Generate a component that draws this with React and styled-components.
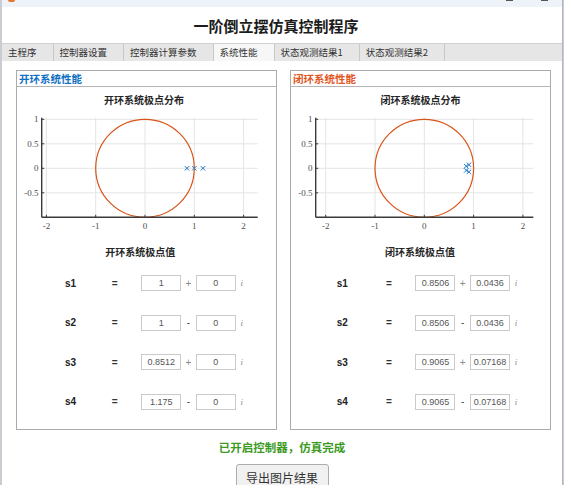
import React from 'react';
import styled, { createGlobalStyle } from 'styled-components';

const cjk = `"Noto Sans CJK SC", "Noto Sans", sans-serif`;
const latin = `"Liberation Sans", Arial, "Noto Sans CJK SC", sans-serif`;
const serif = `"Liberation Serif", "Times New Roman", serif`;

const GlobalStyle = createGlobalStyle`
  html, body {
    margin: 0;
    padding: 0;
  }
  body {
    background: #c9ccd1;
    overflow: hidden;
  }
`;

const Window = styled.div`
  box-sizing: border-box;
  width: 561px;
  height: 485px;
  margin-left: 2px;
  background: #fff;
  border-right: 1px solid #b4b8be;
  overflow: hidden;
  font-family: ${cjk};
`;

const TitleBar = styled.div`
  height: 7px;
  background: #eef2f9;
  display: flex;
  align-items: flex-end;
  overflow: hidden;
  padding: 0 0 0 6px;
`;

const AppIcon = styled.span`
  width: 7px;
  height: 8px;
  margin-bottom: 5px;
  border-radius: 2px;
  background: #e8752b;
`;

const WindowControls = styled.div`
  margin-left: auto;
  display: flex;
  align-items: flex-end;
  gap: 28px;
  padding-right: 14px;
`;

const ControlMark = styled.span`
  width: 7px;
  height: 1px;
  margin-bottom: 6px;
  background: #555;
`;

const Header = styled.div`
  box-sizing: border-box;
  height: 36px;
  padding: 1px 12px 0 0;
  display: flex;
  align-items: center;
  justify-content: center;
  font-size: 15px;
  font-weight: 700;
  color: #1c1c1c;
`;

const TabBar = styled.div`
  box-sizing: border-box;
  height: 18px;
  display: flex;
  background: #e6e6e6;
  border-top: 1px solid #d0d0d0;
`;

const Tab = styled.div`
  padding: 0 16px 0 6px;
  font-size: 9.5px;
  line-height: 17px;
  color: #333;
  white-space: nowrap;
  border-right: 1px solid #c9c9c9;
  background: ${p => (p.$active ? '#f7f7f7' : 'transparent')};
`;

const Content = styled.div`
  display: flex;
  gap: 13px;
  padding: 9px 0 0 14px;
`;

const Panel = styled.div`
  box-sizing: border-box;
  width: 261px;
  height: 360px;
  border: 1px solid #ababab;
  display: flex;
  flex-direction: column;
`;

const PanelHeader = styled.div`
  height: 15px;
  padding-left: 2px;
  border-bottom: 1px solid #b4b4b4;
  font-size: 10.5px;
  font-weight: 700;
  line-height: 15px;
  color: ${p => p.$color};
`;

const SectionTitle = styled.div`
  margin-top: ${p => p.$top}px;
  padding-right: ${p => p.$shift}px;
  text-align: center;
  font-size: 10px;
  font-weight: 700;
  line-height: 14px;
  color: #262626;
`;

const PlotSvg = styled.svg`
  display: block;
  width: 259px;
  height: 138px;
  font-family: ${serif};
`;

const Rows = styled.div`
  padding-top: 4.5px;
`;

const PoleRow = styled.div`
  display: grid;
  grid-template-columns: ${p => p.$labelW}px 29.5px 40px 14.5px 40px auto;
  align-items: center;
  height: 39.5px;
  padding-left: ${p => p.$pad}px;
  font-family: ${latin};
`;

const PoleName = styled.span`
  font-size: 10px;
  font-weight: 700;
  color: #222;
`;

const Equals = styled.span`
  font-size: 10px;
  font-weight: 700;
  color: #333;
`;

const ValueBox = styled.div`
  box-sizing: border-box;
  height: 16px;
  border: 1px solid #cacaca;
  background: #fff;
  text-align: center;
  font-size: 9px;
  line-height: 14px;
  color: #555;
`;

const Sign = styled.span`
  text-align: center;
  font-size: 10px;
  color: ${p => (p.$plus ? '#8a8a8a' : '#444')};
`;

const Imag = styled.span`
  margin-left: 4.7px;
  font-family: ${serif};
  font-style: italic;
  font-size: 9px;
  color: #8a8a8a;
`;

const Status = styled.div`
  margin-top: 9px;
  text-align: center;
  font-size: 11.5px;
  font-weight: 700;
  line-height: 16px;
  color: #3c9a1f;
`;

const ButtonRow = styled.div`
  display: flex;
  justify-content: center;
  margin-top: 9px;
`;

const ExportButton = styled.button`
  box-sizing: border-box;
  width: 93px;
  height: 26px;
  border: 1px solid #adadad;
  border-radius: 3px;
  background: #f1f1f1;
  font-family: ${cjk};
  font-size: 12px;
  color: #333;
  padding: 0;
`;

const SCALE_X = 49.3;
const SCALE_Y = 49;
const AX_LEFT = 24.7;
const AX_TOP = 10.7;
const AX_BOTTOM = 110.3;
const ZERO_Y = 61.3;

function PolePlot({ cx, xEnd, poles }) {
  const px = v => cx + v * SCALE_X;
  const py = v => ZERO_Y - v * SCALE_Y;
  const xTicks = [-2, -1, 0, 1, 2];
  const yTicks = [1, 0.5, 0, -0.5];

  return (
    <PlotSvg viewBox="0 0 259 138">
      {xTicks.map(t => (
        <line key={'gx' + t} x1={px(t)} x2={px(t)} y1={AX_TOP} y2={AX_BOTTOM} stroke="#e4e4e4" strokeWidth="1" />
      ))}
      {yTicks.map(t => (
        <line key={'gy' + t} x1={AX_LEFT} x2={xEnd} y1={py(t)} y2={py(t)} stroke="#e4e4e4" strokeWidth="1" />
      ))}

      <ellipse cx={cx} cy={ZERO_Y} rx={SCALE_X} ry={SCALE_Y} fill="none" stroke="#d95319" strokeWidth="1.2" />

      {poles.map(([re, im], i) => {
        const x = px(re);
        const y = py(im);
        const s = 2.2;
        return (
          <path
            key={i}
            d={`M${x - s} ${y - s}L${x + s} ${y + s}M${x - s} ${y + s}L${x + s} ${y - s}`}
            stroke="#1f77c4"
            strokeWidth="1"
          />
        );
      })}

      <line x1={AX_LEFT} x2={AX_LEFT} y1={AX_TOP} y2={AX_BOTTOM} stroke="#3a3a3a" strokeWidth="1.4" />
      <line x1={AX_LEFT} x2={xEnd} y1={AX_BOTTOM} y2={AX_BOTTOM} stroke="#3a3a3a" strokeWidth="1.4" />
      {xTicks.map(t => (
        <line key={'tx' + t} x1={px(t)} x2={px(t)} y1={AX_BOTTOM} y2={AX_BOTTOM - 2.5} stroke="#3a3a3a" strokeWidth="1" />
      ))}
      {yTicks.map(t => (
        <line key={'ty' + t} x1={AX_LEFT} x2={AX_LEFT + 2.5} y1={py(t)} y2={py(t)} stroke="#3a3a3a" strokeWidth="1" />
      ))}

      {xTicks.map(t => (
        <text key={'lx' + t} x={px(t)} y={121.8} textAnchor="middle" fontSize="9" fill="#4d4d4d">
          {t}
        </text>
      ))}
      {yTicks.map(t => (
        <text key={'ly' + t} x={21.5} y={py(t) + 3} textAnchor="end" fontSize="9" fill="#4d4d4d">
          {t}
        </text>
      ))}
    </PlotSvg>
  );
}

const panels = [
  {
    title: '开环系统性能',
    color: '#1070c4',
    plotTitle: '开环系统极点分布',
    tableTitle: '开环系统极点值',
    cx: 128,
    xEnd: 240.7,
    poles: [[0.8512, 0], [1, 0], [1.175, 0]],
    rows: [
      ['1', '+', '0'],
      ['1', '-', '0'],
      ['0.8512', '+', '0'],
      ['1.175', '-', '0'],
    ],
    pad: 48,
    labelW: 46.7,
    plotShift: 5,
    tableShift: 12.6,
  },
  {
    title: '闭环系统性能',
    color: '#e2571f',
    plotTitle: '闭环系统极点分布',
    tableTitle: '闭环系统极点值',
    cx: 133.3,
    xEnd: 242.3,
    poles: [
      [0.8506, 0.0436],
      [0.8506, -0.0436],
      [0.9065, 0.07168],
      [0.9065, -0.07168],
    ],
    rows: [
      ['0.8506', '+', '0.0436'],
      ['0.8506', '-', '0.0436'],
      ['0.9065', '+', '0.07168'],
      ['0.9065', '-', '0.07168'],
    ],
    pad: 45.7,
    labelW: 49.3,
    plotShift: 0,
    tableShift: 1,
  },
];

const tabs = ['主程序', '控制器设置', '控制器计算参数', '系统性能', '状态观测结果1', '状态观测结果2'];

export default function App() {
  return (
    <>
      <GlobalStyle />
      <Window>
        <TitleBar>
          <AppIcon />
          <WindowControls>
            <ControlMark />
            <ControlMark />
          </WindowControls>
        </TitleBar>

        <Header>一阶倒立摆仿真控制程序</Header>

        <TabBar>
          {tabs.map(t => (
            <Tab key={t} $active={t === '系统性能'}>
              {t}
            </Tab>
          ))}
        </TabBar>

        <Content>
          {panels.map(p => (
            <Panel key={p.title}>
              <PanelHeader $color={p.color}>{p.title}</PanelHeader>
              <SectionTitle $top={6} $shift={p.plotShift}>
                {p.plotTitle}
              </SectionTitle>
              <PolePlot cx={p.cx} xEnd={p.xEnd} poles={p.poles} />
              <SectionTitle $top={0} $shift={p.tableShift}>
                {p.tableTitle}
              </SectionTitle>
              <Rows>
                {p.rows.map(([re, sign, im], i) => (
                  <PoleRow key={i} $pad={p.pad} $labelW={p.labelW}>
                    <PoleName>s{i + 1}</PoleName>
                    <Equals>=</Equals>
                    <ValueBox>{re}</ValueBox>
                    <Sign $plus={sign === '+'}>{sign}</Sign>
                    <ValueBox>{im}</ValueBox>
                    <Imag>i</Imag>
                  </PoleRow>
                ))}
              </Rows>
            </Panel>
          ))}
        </Content>

        <Status>已开启控制器，仿真完成</Status>
        <ButtonRow>
          <ExportButton>导出图片结果</ExportButton>
        </ButtonRow>
      </Window>
    </>
  );
}
